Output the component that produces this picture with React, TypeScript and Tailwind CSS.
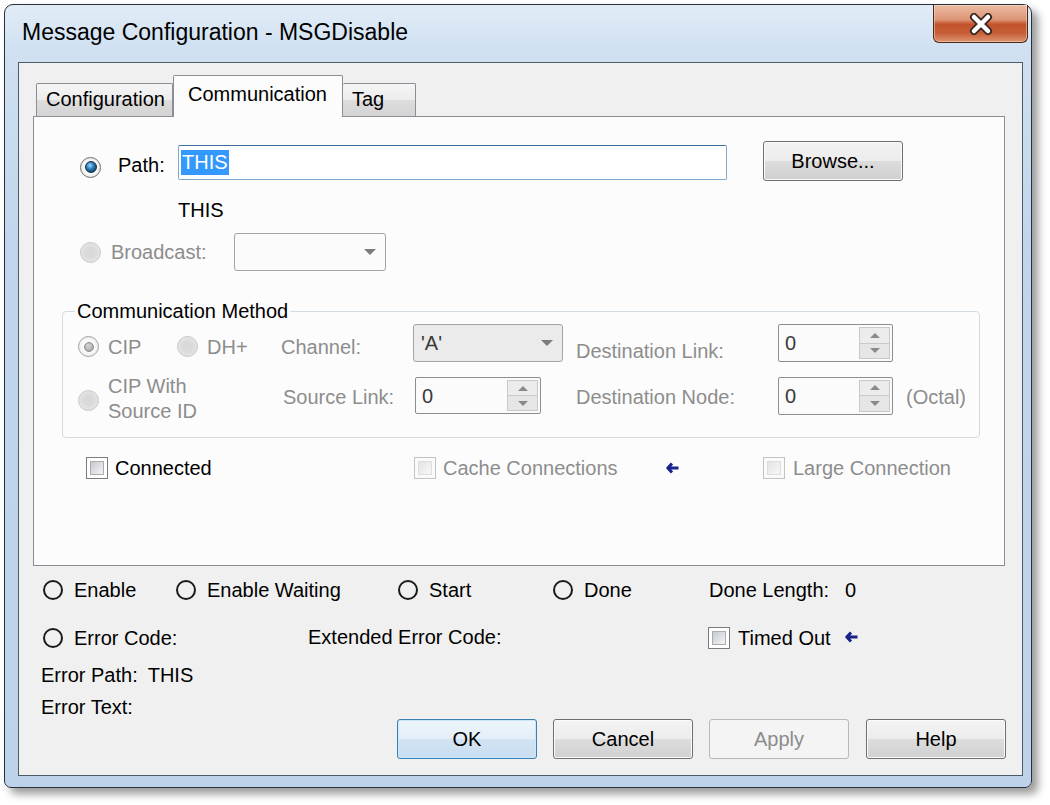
import React from "react";

type RadioKind = "on" | "onDisabled" | "offDisabled" | "status";

function Radio({ kind, className = "" }: { kind: RadioKind; className?: string }) {
  if (kind === "status") {
    return <span className={`block w-[20px] h-[20px] rounded-full border-2 border-[#1b1b1b] shrink-0 ${className}`} />;
  }
  if (kind === "on") {
    return (
      <span className={`flex w-[21px] h-[21px] rounded-full border border-[#6f6f6f] bg-[radial-gradient(circle,#ffffff_45%,#cfcfcf_100%)] items-center justify-center shrink-0 ${className}`}>
        <span className="block w-[12px] h-[12px] rounded-full border border-[#10293f] bg-[radial-gradient(circle_at_40%_35%,#9ad8ff_0%,#2474b0_45%,#0b2f4f_100%)]" />
      </span>
    );
  }
  if (kind === "onDisabled") {
    return (
      <span className={`flex w-[21px] h-[21px] rounded-full border border-[#a3a3a3] bg-[radial-gradient(circle,#fbfbfb_45%,#dcdcdc_100%)] items-center justify-center shrink-0 ${className}`}>
        <span className="block w-[10px] h-[10px] rounded-full border border-[#8a8a8a] bg-[radial-gradient(circle_at_40%_35%,#d6d6d6_0%,#9c9c9c_100%)]" />
      </span>
    );
  }
  return (
    <span className={`block w-[21px] h-[21px] rounded-full border border-[#c8c8c8] bg-[radial-gradient(circle,#d9d9d9_30%,#ececec_100%)] shrink-0 ${className}`} />
  );
}

function Check({ disabled = false }: { disabled?: boolean }) {
  return disabled ? (
    <span className="block w-[22px] h-[22px] border border-[#c3c3c3] bg-[#fafafa] p-[3px] shrink-0">
      <span className="block w-full h-full border border-[#dedede] bg-[linear-gradient(135deg,#e4e4e4,#f7f7f7)]" />
    </span>
  ) : (
    <span className="block w-[22px] h-[22px] border border-[#7c7c7c] bg-white p-[3px] shrink-0">
      <span className="block w-full h-full border border-[#a9adb3] bg-[linear-gradient(135deg,#c6cad0,#f4f4f4)]" />
    </span>
  );
}

function Arrow() {
  return (
    <svg width="14" height="12" viewBox="0 0 14 12" className="shrink-0">
      <path d="M6 1.5 L1.8 6 L6 10.5 M2 6 H12.5" stroke="#17238a" strokeWidth="3" fill="none" strokeLinejoin="round" />
    </svg>
  );
}

function DownTri() {
  return <span className="block w-0 h-0 border-l-[6px] border-r-[6px] border-t-[6px] border-l-transparent border-r-transparent border-t-[#7c7c7c]" />;
}

function Combo({ value = "", width, filled = false }: { value?: string; width: string; filled?: boolean }) {
  return (
    <div className={`${width} h-[38px] shrink-0 rounded-[3px] border border-[#a4a4a4] flex items-center justify-between pl-[7px] pr-[9px] ${filled ? "bg-[#ebebeb]" : "bg-[#fbfbfb]"}`}>
      <span className="text-[#3a3a3a]">{value}</span>
      <DownTri />
    </div>
  );
}

function Spin({ width, height = "h-[38px]" }: { width: string; height?: string }) {
  return (
    <div className={`${width} ${height} shrink-0 rounded-[2px] border border-[#8d8d8d] bg-[#fbfbfb] flex items-stretch`}>
      <span className="flex-1 flex items-center pl-[6px] text-[#3a3a3a]">0</span>
      <div className="w-[31px] my-[2px] mr-[2px] flex flex-col border border-[#c9c9c9]">
        <div className="flex-1 flex items-center justify-center bg-[#ececec] border-b border-[#c9c9c9]">
          <span className="block w-0 h-0 border-l-[5px] border-r-[5px] border-b-[5px] border-l-transparent border-r-transparent border-b-[#8a8a8a]" />
        </div>
        <div className="flex-1 flex items-center justify-center bg-[#e6e6e6]">
          <span className="block w-0 h-0 border-l-[5px] border-r-[5px] border-t-[5px] border-l-transparent border-r-transparent border-t-[#8a8a8a]" />
        </div>
      </div>
    </div>
  );
}

function Button({ label, kind = "normal", className = "" }: { label: string; kind?: "normal" | "default" | "disabled"; className?: string }) {
  const look =
    kind === "default"
      ? "border-[#3c7fb1] bg-[linear-gradient(to_bottom,#eef5fb_0%,#e3eef8_50%,#d2e4f3_50%,#c7ddf0_100%)] shadow-[inset_0_0_0_1px_#c9e8fb] text-black"
      : kind === "disabled"
      ? "border-[#b5b9bc] bg-[#f4f4f4] text-[#8c8c8c]"
      : "border-[#6f6f6f] bg-[linear-gradient(to_bottom,#f3f3f3_0%,#ececec_50%,#dddddd_50%,#d0d0d0_100%)] shadow-[inset_0_0_0_1px_#fbfbfb] text-black";
  return (
    <div className={`w-[140px] h-[40px] shrink-0 rounded-[3px] border flex items-center justify-center ${look} ${className}`}>
      {label}
    </div>
  );
}

function CloseButton() {
  return (
    <div className="-mr-[5px] w-[95px] h-[38px] rounded-b-[6px] border border-t-0 border-[#4b2819] bg-[linear-gradient(to_bottom,#ecbca4_0%,#dc9474_40%,#c1532b_52%,#c65d36_75%,#dd9470_100%)] shadow-[inset_0_0_0_1px_rgba(255,235,220,0.45)] flex items-center justify-center">
      <svg width="28" height="22" viewBox="0 0 28 22">
        <path d="M7 4 L21 18 M21 4 L7 18" stroke="#3a2820" strokeWidth="8" strokeLinecap="round" />
        <path d="M7 4 L21 18 M21 4 L7 18" stroke="#ffffff" strokeWidth="4.5" strokeLinecap="round" />
      </svg>
    </div>
  );
}

export default function App() {
  return (
    <div className="w-[1050px] h-[805px] bg-white overflow-hidden font-['Liberation_Sans',Arial,sans-serif] text-[20px] leading-[24px] text-black">
      <div className="ml-[4px] mt-[4px] w-[1028px] h-[784px] flex flex-col rounded-t-[9px] rounded-b-[7px] border border-[#27313b] bg-[linear-gradient(to_bottom,#e2ecf7_0%,#cfe0f1_6%,#c1d6ec_30%,#bcd3ea_100%)] shadow-[6px_6px_8px_rgba(0,0,0,0.4)] pl-[13px] pr-[8px] pb-[11px]">
        {/* title bar */}
        <div className="h-[57px] flex items-start justify-between shrink-0">
          <div className="pl-[4px] pt-[14px] text-[23px] leading-[26px]">Message Configuration - MSGDisable</div>
          <CloseButton />
        </div>

        {/* client */}
        <div className="flex-1 flex flex-col border border-[#4d5a68] bg-[#f0f0f0]">
          {/* tabs */}
          <div className="ml-[14px] mr-[17px] mt-[12px] flex items-end h-[41px]">
            <div className="ml-[3px] w-[137px] h-[33px] border border-b-0 border-[#8b8e96] rounded-t-[2px] bg-[linear-gradient(to_bottom,#f5f5f5_0%,#ececec_50%,#dcdcdc_52%,#d4d4d4_100%)] flex items-center pl-[9px] pb-[2px]">
              Configuration
            </div>
            <div className="relative z-10 w-[170px] h-[42px] -mb-[1px] border border-b-0 border-[#8b8e96] rounded-t-[2px] bg-[#fcfcfc] flex items-center pl-[14px] pb-[6px]">
              Communication
            </div>
            <div className="w-[73px] h-[33px] border border-b-0 border-l-0 border-[#8b8e96] rounded-t-[2px] bg-[linear-gradient(to_bottom,#f5f5f5_0%,#ececec_50%,#dcdcdc_52%,#d4d4d4_100%)] flex items-center pl-[9px] pb-[2px]">
              Tag
            </div>
          </div>

          {/* tab panel */}
          <div className="ml-[14px] mr-[17px] h-[450px] border border-[#8b8e96] bg-[#fcfcfc] flex flex-col">
            <div className="mt-[25px] h-[38px] flex items-center pl-[46px]">
              <Radio kind="on" className="mt-[12px]" />
              <span className="ml-[17px] w-[60px] mt-[7px]">Path:</span>
              <div className="self-end w-[549px] h-[35px] rounded-[2px] border border-[#7fa9d1] border-t-[#3d6f9e] bg-white flex items-center pl-[2px]">
                <span className="bg-[#3399ff] text-white px-[1px] leading-[25px]">THIS</span>
              </div>
              <Button label="Browse..." className="ml-[36px]" />
            </div>

            <div className="pl-[144px] mt-[19px] leading-[22px]">THIS</div>

            <div className="mt-[12px] h-[38px] flex items-center pl-[46px]">
              <Radio kind="offDisabled" />
              <span className="ml-[10px] w-[123px] text-[#8d8d8d]">Broadcast:</span>
              <Combo width="w-[152px]" />
            </div>

            <fieldset className="ml-[28px] w-[918px] mt-[28px] border border-[#d3dbe2] rounded-[4px] pb-[22px]">
              <legend className="ml-[12px] px-[2px] leading-[24px]">Communication Method</legend>
              <div className="mt-[1px] h-[38px] flex items-center pl-[15px] text-[#8d8d8d]">
                <div className="w-[99px] flex items-center mt-[7px]">
                  <Radio kind="onDisabled" />
                  <span className="ml-[9px]">CIP</span>
                </div>
                <div className="w-[104px] flex items-center mt-[7px]">
                  <Radio kind="offDisabled" />
                  <span className="ml-[9px]">DH+</span>
                </div>
                <span className="w-[132px] mt-[7px]">Channel:</span>
                <Combo value="'A'" width="w-[150px]" filled />
                <span className="ml-[13px] w-[202px] mt-[15px]">Destination Link:</span>
                <Spin width="w-[115px]" />
              </div>
              <div className="mt-[14px] h-[39px] flex items-center pl-[15px] text-[#8d8d8d]">
                <div className="w-[205px] flex items-center">
                  <Radio kind="offDisabled" className="mt-[9px]" />
                  <span className="ml-[9px] leading-[25px] mt-[7px]">
                    CIP With
                    <br />
                    Source ID
                  </span>
                </div>
                <span className="w-[132px] mt-[2px]">Source Link:</span>
                <Spin width="w-[126px]" height="h-[37px]" />
                <span className="ml-[35px] w-[202px] mt-[2px]">Destination Node:</span>
                <Spin width="w-[115px]" />
                <span className="ml-[13px] mt-[2px]">(Octal)</span>
              </div>
            </fieldset>

            <div className="mt-[18px] flex items-center pl-[52px]">
              <div className="w-[328px] flex items-center">
                <Check />
                <span className="ml-[7px]">Connected</span>
              </div>
              <div className="w-[252px] flex items-center text-[#8d8d8d]">
                <Check disabled />
                <span className="ml-[7px]">Cache Connections</span>
              </div>
              <Arrow />
              <div className="ml-[83px] flex items-center text-[#8d8d8d]">
                <Check disabled />
                <span className="ml-[8px]">Large Connection</span>
              </div>
            </div>
          </div>

          {/* status area */}
          <div className="mt-[12px] h-[24px] flex items-center pl-[24px]">
            <div className="w-[133px] flex items-center">
              <Radio kind="status" />
              <span className="ml-[11px]">Enable</span>
            </div>
            <div className="w-[222px] flex items-center">
              <Radio kind="status" />
              <span className="ml-[11px]">Enable Waiting</span>
            </div>
            <div className="w-[155px] flex items-center">
              <Radio kind="status" />
              <span className="ml-[11px]">Start</span>
            </div>
            <div className="w-[156px] flex items-center">
              <Radio kind="status" />
              <span className="ml-[11px]">Done</span>
            </div>
            <span>Done Length:</span>
            <span className="ml-[16px]">0</span>
          </div>

          <div className="mt-[24px] h-[24px] flex items-center pl-[24px]">
            <div className="w-[265px] flex items-center">
              <Radio kind="status" />
              <span className="ml-[11px]">Error Code:</span>
            </div>
            <span className="w-[400px] -mt-[3px]">Extended Error Code:</span>
            <Check />
            <span className="ml-[8px]">Timed Out</span>
            <span className="ml-[14px] -mt-[3px]">
              <Arrow />
            </span>
          </div>

          <div className="mt-[13px] pl-[22px] flex">
            <span>Error Path:</span>
            <span className="ml-[10px]">THIS</span>
          </div>
          <div className="mt-[8px] pl-[22px]">Error Text:</div>

          <div className="flex justify-end pr-[16px] gap-[16px]">
            <Button label="OK" kind="default" />
            <Button label="Cancel" />
            <Button label="Apply" kind="disabled" className="mr-[1px]" />
            <Button label="Help" />
          </div>
        </div>
      </div>
    </div>
  );
}
